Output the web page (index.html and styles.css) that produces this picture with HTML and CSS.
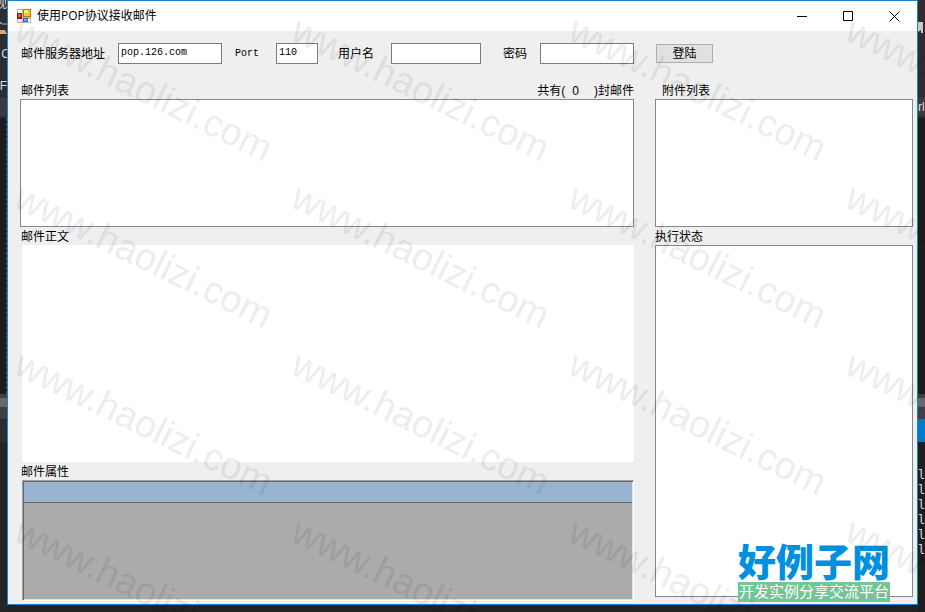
FILE: index.html
```
<!DOCTYPE html>
<html lang="zh-CN">
<head>
  <meta charset="UTF-8">
  <meta name="viewport" content="width=device-width, initial-scale=1.0">
  <title>使用POP协议接收邮件</title>
  <link rel="stylesheet" href="styles.css">
</head>
<body>
  <!-- Editor showing on the left of the window -->
  <div class="editor editor-left" aria-hidden="true">
    <div class="editor-menu">
      <span class="menu-text">视</span>
      <svg class="menu-icon" width="7" height="20" viewBox="0 0 7 20"><path d="M0 7h2" stroke="#4ba3e3" stroke-width="2"/><path d="M2 8h5" stroke="#d7a867" stroke-width="1"/><path d="M0 14h5l2 4H0z" fill="#d7a867"/></svg>
      <span class="menu-text menu-code">C</span>
      <span class="menu-text menu-file">F</span>
    </div>
    <div class="editor-tabs"></div>
    <div class="editor-code"></div>
    <div class="editor-scroll"></div>
    <div class="editor-caption"></div>
    <div class="editor-output"></div>
  </div>

  <div class="window">
    <div class="title-bar">
      <svg class="app-icon" width="14" height="14" viewBox="0 0 14 14">
        <rect width="14" height="14" fill="#b8b8b8"/>
        <rect x="1" y="1" width="4" height="3" fill="#fff"/>
        <rect x="1" y="10" width="4" height="3" fill="#eee"/>
        <rect x="11" y="10" width="2" height="3" fill="#fff"/>
        <rect x="0" y="4" width="5" height="6" fill="#9c1414"/>
        <rect x="1" y="5" width="3" height="3" fill="#e2543f"/>
        <rect x="6" y="0" width="8" height="8" fill="#b87b00"/>
        <rect x="7" y="1" width="6" height="6" fill="#ffcb2e"/>
        <rect x="7" y="1" width="4" height="3" fill="#ffe88a"/>
        <rect x="6" y="9" width="5" height="4" fill="#2765c8"/>
        <rect x="7" y="10" width="3" height="2" fill="#76aef2"/>
      </svg>
      <h1>使用POP协议接收邮件</h1>
      <div class="window-buttons">
        <button class="window-button" aria-label="最小化"><svg width="11" height="11" viewBox="0 0 11 11"><path d="M0 5.500h10" stroke="#000"/></svg></button>
        <button class="window-button" aria-label="最大化"><svg width="11" height="11" viewBox="0 0 11 11"><path d="M.5 .5h9v9h-9z" fill="none" stroke="#000"/></svg></button>
        <button class="window-button" aria-label="关闭"><svg width="11" height="11" viewBox="0 0 11 11"><path d="M.5 .5l10 10M10.500 .5l-10 10" stroke="#000"/></svg></button>
      </div>
    </div>

    <form class="content" onsubmit="return false">
      <div class="login-fields">
        <label for="server">邮件服务器地址</label>
        <input type="text" id="server" value="pop.126.com">
        <label for="port" class="wide port-label">Port</label>
        <input type="text" id="port" value="110">
        <label for="user" class="wide">用户名</label>
        <input type="text" id="user">
        <label for="password">密码</label>
        <input type="password" id="password">
      </div>
      <div class="login-action">
        <button class="login-button">登陆</button>
      </div>

      <div class="column">
        <div class="caption">
          <label for="mail-list">邮件列表</label>
          <span class="mail-count"><span>共有(</span><span>0</span><span>)封邮件</span></span>
        </div>
        <select id="mail-list" class="list" size="4"></select>
        <div class="caption"><label for="mail-body">邮件正文</label></div>
        <textarea id="mail-body" class="mail-body"></textarea>
        <div class="caption" id="attributes">邮件属性</div>
        <div class="data-grid">
          <table aria-labelledby="attributes">
            <thead><tr><th></th></tr></thead>
          </table>
        </div>
      </div>

      <div class="column column-right">
        <div class="caption indent"><label for="attachments">附件列表</label></div>
        <select id="attachments" class="list" size="4"></select>
        <div class="caption flush"><label for="status">执行状态</label></div>
        <textarea id="status" class="status" readonly></textarea>
      </div>
    </form>

    <div class="site-logo">
      <strong>好例子网</strong>
      <span>开发实例分享交流平台</span>
    </div>
  </div>

  <!-- Editor showing on the right of the window -->
  <div class="editor editor-right" aria-hidden="true">
    <div class="editor-menu">
      <svg class="menu-flag" width="5" height="11" viewBox="0 0 5 11"><path d="M0 0h5v11H3V8L0 10z" fill="#c8c8c8"/></svg>
    </div>
    <div class="editor-tabs">rl</div>
    <div class="editor-code"></div>
    <div class="editor-scroll"></div>
    <div class="editor-caption active"></div>
    <div class="editor-output">
      <span>l</span><span>l</span><span>l</span><span>l</span><span>l</span><span>l</span>
    </div>
  </div>

  <svg class="watermark" width="100%" height="100%" aria-hidden="true">
    <defs>
      <pattern id="mark" x="8" y="14" width="277" height="167" patternUnits="userSpaceOnUse">
        <text x="4" y="25" transform="rotate(26 4 25)">www.haolizi.com</text>
      </pattern>
    </defs>
    <rect width="100%" height="100%" fill="url(#mark)"/>
  </svg>
</body>
</html>
```

FILE: styles.css
```
* {
  box-sizing: border-box;
}

body {
  display: flex;
  min-height: 100vh;
  margin: 0;
  background-color: #222223;
  color: #000;
  font-family: "Liberation Sans", "Noto Sans CJK SC", sans-serif;
  font-size: 12px;
  line-height: 18px;
}

input,
button,
select,
textarea {
  margin: 0;
  padding: 0;
  border-radius: 0;
  color: #000;
  font: inherit;
}

/* Editor behind the window */
.editor {
  display: flex;
  flex-direction: column;
  width: 7px;
  overflow: hidden;
  color: #dcdcdc;
}

.editor-menu {
  position: relative;
  height: 98px;
  background-color: #2d2d30;
}

.menu-text {
  position: absolute;
  top: -5px;
  right: 0;
}

.menu-code {
  top: 45px;
  right: -3px;
}

.menu-file {
  top: 77px;
}

.menu-icon {
  position: absolute;
  top: 16px;
  left: 0;
}

.menu-flag {
  position: absolute;
  top: 22px;
  left: 0;
}

.editor-tabs {
  height: 20px;
  border-bottom: 2px solid #2d2d30;
  background-color: #3a3a42;
}

.editor-code {
  height: 276px;
  background-color: #1c1c1c;
}

.editor-left .editor-code {
  border-right: 1px dashed #505050;
}

.editor-scroll {
  height: 13px;
  border-top: 4px solid #3f3f46;
  background-color: #686868;
}

.editor-caption {
  height: 35px;
  border-top: 12px solid #3f3f46;
  background-color: #2d2d30;
}

.editor-caption.active {
  background-color: #007acc;
}

.editor-output {
  display: flex;
  flex: 1;
  flex-direction: column;
  padding-top: 26px;
  background-color: #252526;
  font-family: "DejaVu Sans Mono", monospace;
  line-height: 15px;
}

.editor-right .editor-output {
  background-color: #1e1e1e;
}

/* Window */
.window {
  position: relative;
  display: flex;
  flex: 1;
  flex-direction: column;
  min-width: 0;
  margin-bottom: 7px;
  border: 1px solid #1883d7;
  background-color: #efefef;
}

.title-bar {
  display: flex;
  align-items: center;
  height: 30px;
  padding-left: 9px;
  background-color: #fff;
}

.title-bar h1 {
  flex: 1;
  margin: 0 0 0 6px;
  font-family: "Open Sans", "Noto Sans CJK SC", sans-serif;
  font-size: 12px;
  font-weight: normal;
}

.window-buttons {
  display: flex;
}

.window-button {
  display: flex;
  align-items: center;
  justify-content: center;
  width: 46px;
  height: 30px;
  border: none;
  background: none;
}

.content {
  display: grid;
  flex: 1;
  grid-template-columns: 614fr 258fr;
  grid-template-rows: 21px 1fr;
  gap: 17px 21px;
  padding: 12px 4px 3px 12px;
}

.login-fields {
  display: grid;
  grid-template-columns: 98fr 104fr 54fr 42fr 73fr 90fr 59fr 94fr;
  align-items: center;
}

.login-fields label {
  padding-right: 13px;
  text-align: right;
  white-space: nowrap;
}

.login-fields .wide {
  padding-right: 17px;
}

.login-fields input {
  width: 100%;
  min-width: 0;
  height: 21px;
  padding: 0 2px 2px;
  border: 1px solid #7a7a7a;
  background-color: #fff;
}

.login-fields input,
.port-label {
  font-family: "Liberation Mono", monospace;
  font-size: 10px;
}

.login-action {
  display: flex;
  align-items: center;
  padding-left: 1px;
}

.login-button {
  width: 57px;
  height: 19px;
  border: 1px solid #adadad;
  background-color: #e1e1e1;
  line-height: 16px;
}

.column {
  display: flex;
  flex-direction: column;
  min-width: 0;
}

.column-right {
  padding-bottom: 4px;
}

.caption {
  display: flex;
  justify-content: space-between;
  height: 18px;
  padding-left: 1px;
  line-height: 20px;
}

.caption.indent {
  padding-left: 7px;
}

.caption.flush {
  padding-left: 0;
}

.mail-count {
  display: flex;
  gap: 7px;
}

.mail-count span:last-child {
  padding-left: 8px;
}

.list {
  appearance: none;
  width: 100%;
  height: 128px;
  border: 1px solid #828790;
  background-color: #fff;
}

.mail-body,
.status {
  display: block;
  min-height: 0;
  border: none;
  background-color: #fff;
  resize: none;
}

.mail-body {
  flex: 217 1 217px;
  margin-left: 2px;
}

.status {
  flex: 1;
  border: 1px solid #828790;
}

/* Sunken two-line frame */
.data-grid {
  flex: 121 1 121px;
  margin-left: 2px;
  padding: 1px 1px 0 1px;
  border: 1px solid;
  border-color: #a0a0a0 #fff #fff #a0a0a0;
  background-color: #ababab;
  box-shadow: inset 1px 1px #696969, inset -1px -1px #e3e3e3;
}

.data-grid table {
  width: 100%;
  border-collapse: collapse;
}

.data-grid th {
  height: 20px;
  padding: 0;
  border-bottom: 1px solid #696969;
  background-color: #99b4d1;
}

/* Logo and watermark lie over the window */
.site-logo {
  position: absolute;
  right: 27px;
  bottom: 2px;
  display: flex;
  flex-direction: column;
  align-items: center;
  width: 152px;
}

.site-logo strong {
  margin-bottom: 3px;
  color: #0090df;
  font-family: "Noto Sans CJK SC", sans-serif;
  font-size: 38px;
  font-weight: 900;
  line-height: 38px;
}

.site-logo span {
  width: 100%;
  background-color: #74c495;
  color: #fff;
  font-size: 15px;
  line-height: 20px;
  text-align: center;
  white-space: nowrap;
}

.watermark {
  position: fixed;
  inset: 0;
  pointer-events: none;
}

.watermark text {
  fill: #000;
  fill-opacity: 0.07;
  font-family: "Liberation Sans", sans-serif;
  font-size: 38px;
}
```
